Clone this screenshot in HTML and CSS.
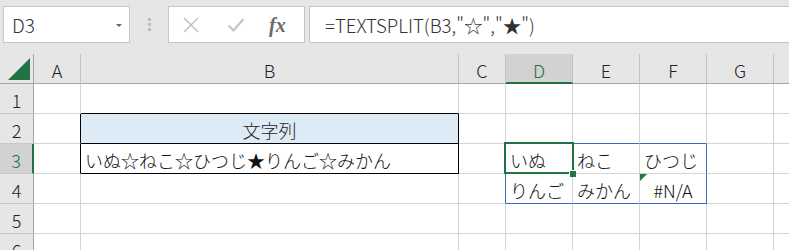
FILE: index.html
```html
<!DOCTYPE html>
<html lang="ja">
<head>
<meta charset="utf-8">
<link rel="stylesheet" href="styles.css">
</head>
<body>
<div class="topbar">
  <div class="namebox"><span class="nb-text">D3</span><span class="nb-arrow"></span></div>
  <div class="dots"><i></i><i></i><i></i></div>
  <div class="fbtns">
    <svg class="ic" width="18" height="18" viewBox="0 0 18 18"><path d="M2 2 L16 16 M16 2 L2 16" stroke="#c3c3c3" stroke-width="1.6" fill="none"/></svg>
    <svg class="ic" width="18" height="18" viewBox="0 0 18 18"><path d="M1.5 9.5 L6.5 14.5 L16.5 3" stroke="#c3c3c3" stroke-width="2.2" fill="none"/></svg>
    <span class="fx">fx</span>
  </div>
  <div class="formula">=TEXTSPLIT(B3,"☆","★")</div>
</div>
<div class="sheet">
  <div class="c corner"><svg width="33" height="29" viewBox="0 0 33 29"><polygon points="30,4 30,26 8,26" fill="#217346"/></svg></div>
  <div class="c h">A</div>
  <div class="c h">B</div>
  <div class="c h">C</div>
  <div class="c h sel-col">D</div>
  <div class="c h">E</div>
  <div class="c h">F</div>
  <div class="c h">G</div>
  <div class="c h last"></div>

  <div class="c rh">1</div>
  <div class="c"></div>
  <div class="c bb-black"></div>
  <div class="c"></div>
  <div class="c"></div>
  <div class="c"></div>
  <div class="c"></div>
  <div class="c"></div>
  <div class="c last"></div>

  <div class="c rh">2</div>
  <div class="c br-black"></div>
  <div class="c title br-black bb-black">文字列</div>
  <div class="c"></div>
  <div class="c bb-blue"></div>
  <div class="c bb-blue"></div>
  <div class="c bb-blue"></div>
  <div class="c"></div>
  <div class="c last"></div>

  <div class="c rh sel-row">3</div>
  <div class="c br-black"></div>
  <div class="c t br-black bb-black">いぬ☆ねこ☆ひつじ★りんご☆みかん</div>
  <div class="c br-blue"></div>
  <div class="c t">いぬ</div>
  <div class="c t">ねこ</div>
  <div class="c t br-blue">ひつじ</div>
  <div class="c"></div>
  <div class="c last"></div>

  <div class="c rh">4</div>
  <div class="c"></div>
  <div class="c"></div>
  <div class="c br-blue"></div>
  <div class="c t bb-blue">りんご</div>
  <div class="c t bb-blue">みかん</div>
  <div class="c t err br-blue bb-blue"><span class="tri"></span>#N/A</div>
  <div class="c"></div>
  <div class="c last"></div>

  <div class="c rh">5</div>
  <div class="c"></div>
  <div class="c"></div>
  <div class="c"></div>
  <div class="c"></div>
  <div class="c"></div>
  <div class="c"></div>
  <div class="c"></div>
  <div class="c last"></div>

  <div class="c rh">6</div>
  <div class="c"></div>
  <div class="c"></div>
  <div class="c"></div>
  <div class="c"></div>
  <div class="c"></div>
  <div class="c"></div>
  <div class="c"></div>
  <div class="c last"></div>

  <div class="selection"></div>
  <div class="handle"></div>
</div>
</body>
</html>
```
FILE: styles.css
```css
html, body {
  margin: 0;
  padding: 0;
  width: 789px;
  height: 250px;
  overflow: hidden;
  background: #e6e6e6;
  font-family: "Noto Sans CJK JP", "Noto Sans", sans-serif;
  font-weight: 300;
}

.topbar {
  height: 54px;
  box-sizing: border-box;
  padding: 6px 0 0 3px;
  display: flex;
  align-items: flex-start;
  background: #e6e6e6;
}

.namebox {
  width: 127px;
  height: 37px;
  box-sizing: border-box;
  border: 1px solid #c6c6c6;
  background: #fff;
  display: flex;
  align-items: center;
  justify-content: space-between;
  padding: 0 7px 0 8px;
}

.nb-text {
  font-size: 19px;
  color: #333;
  line-height: 1;
}

.nb-arrow {
  width: 0;
  height: 0;
  border-left: 3px solid transparent;
  border-right: 3px solid transparent;
  border-top: 3px solid #666;
  margin-top: 2px;
}

.dots {
  width: 38px;
  height: 37px;
  display: flex;
  flex-direction: column;
  align-items: center;
  justify-content: center;
  gap: 2px;
}

.dots i {
  display: block;
  width: 3px;
  height: 3px;
  background: #bdbdbd;
}

.fbtns {
  width: 137px;
  height: 37px;
  box-sizing: border-box;
  border: 1px solid #c6c6c6;
  background: #fff;
  display: flex;
  align-items: center;
  padding-left: 13px;
  gap: 27px;
}

.ic {
  display: block;
}

.fx {
  font-family: "Liberation Serif", "DejaVu Serif", serif;
  font-style: italic;
  font-weight: 700;
  font-size: 20px;
  color: #6a6a6a;
  line-height: 1;
  margin-left: -3px;
}

.formula {
  flex: 1;
  margin-left: 4px;
  height: 37px;
  box-sizing: border-box;
  border: 1px solid #c6c6c6;
  border-right: none;
  background: #fff;
  font-size: 18.6px;
  color: #333;
  line-height: 35px;
  padding-left: 15px;
  white-space: nowrap;
}

.sheet {
  position: relative;
  display: grid;
  grid-template-columns: 34px 47px 378px 47px 67px 67px 67px 67px 1fr;
  grid-template-rows: 30px repeat(6, 30px);
  background: #fff;
}

.c {
  box-sizing: border-box;
  border-right: 1px solid #d4d4d4;
  border-bottom: 1px solid #d4d4d4;
  position: relative;
  font-size: 18px;
  line-height: 1;
  color: #111;
  white-space: nowrap;
}

.c.last {
  border-right: none;
}

.corner {
  background: #e6e6e6;
  border-right: 1px solid #a6a6a6;
  border-bottom: 1px solid #a6a6a6;
}

.corner svg {
  display: block;
}

.h {
  background: #e6e6e6;
  border-right: 1px solid #c3c3c3;
  border-bottom: 1px solid #a6a6a6;
  display: flex;
  align-items: center;
  justify-content: center;
  color: #222;
  font-size: 18px;
  padding-top: 2px;
}

.h.sel-col {
  background: #d2d2d2;
  color: #217346;
  border-bottom: 2px solid #217346;
  padding-top: 3px;
}

.rh {
  background: #e6e6e6;
  border-right: 1px solid #a6a6a6;
  border-bottom: 1px solid #c8c8c8;
  display: flex;
  align-items: center;
  justify-content: center;
  color: #222;
  font-size: 18px;
  padding-top: 3px;
}

.rh.sel-row {
  background: #d2d2d2;
  color: #217346;
  border-right: 2px solid #217346;
}

.t {
  display: flex;
  align-items: center;
  padding: 3px 0 0 4px;
}

.title {
  background: #ddebf7;
  display: flex;
  align-items: center;
  justify-content: center;
  padding-top: 3px;
  color: #222;
}

.err {
  justify-content: center;
  padding-left: 0;
}

.tri {
  position: absolute;
  left: 0;
  top: 0;
  width: 0;
  height: 0;
  border-top: 7px solid #1e7b34;
  border-right: 7px solid transparent;
}

.bb-black { border-bottom-color: #000; }
.br-black { border-right-color: #000; }
.bb-blue { border-bottom-color: #3a6ac0; }
.br-blue { border-right-color: #3a6ac0; }

.selection {
  position: absolute;
  left: 504px;
  top: 88px;
  width: 70px;
  height: 32px;
  box-sizing: border-box;
  border: 2px solid #217346;
  pointer-events: none;
}

.handle {
  position: absolute;
  left: 569px;
  top: 116px;
  width: 7px;
  height: 7px;
  box-sizing: border-box;
  background: #217346;
  border-left: 1px solid #fff;
  border-top: 1px solid #fff;
}
```
